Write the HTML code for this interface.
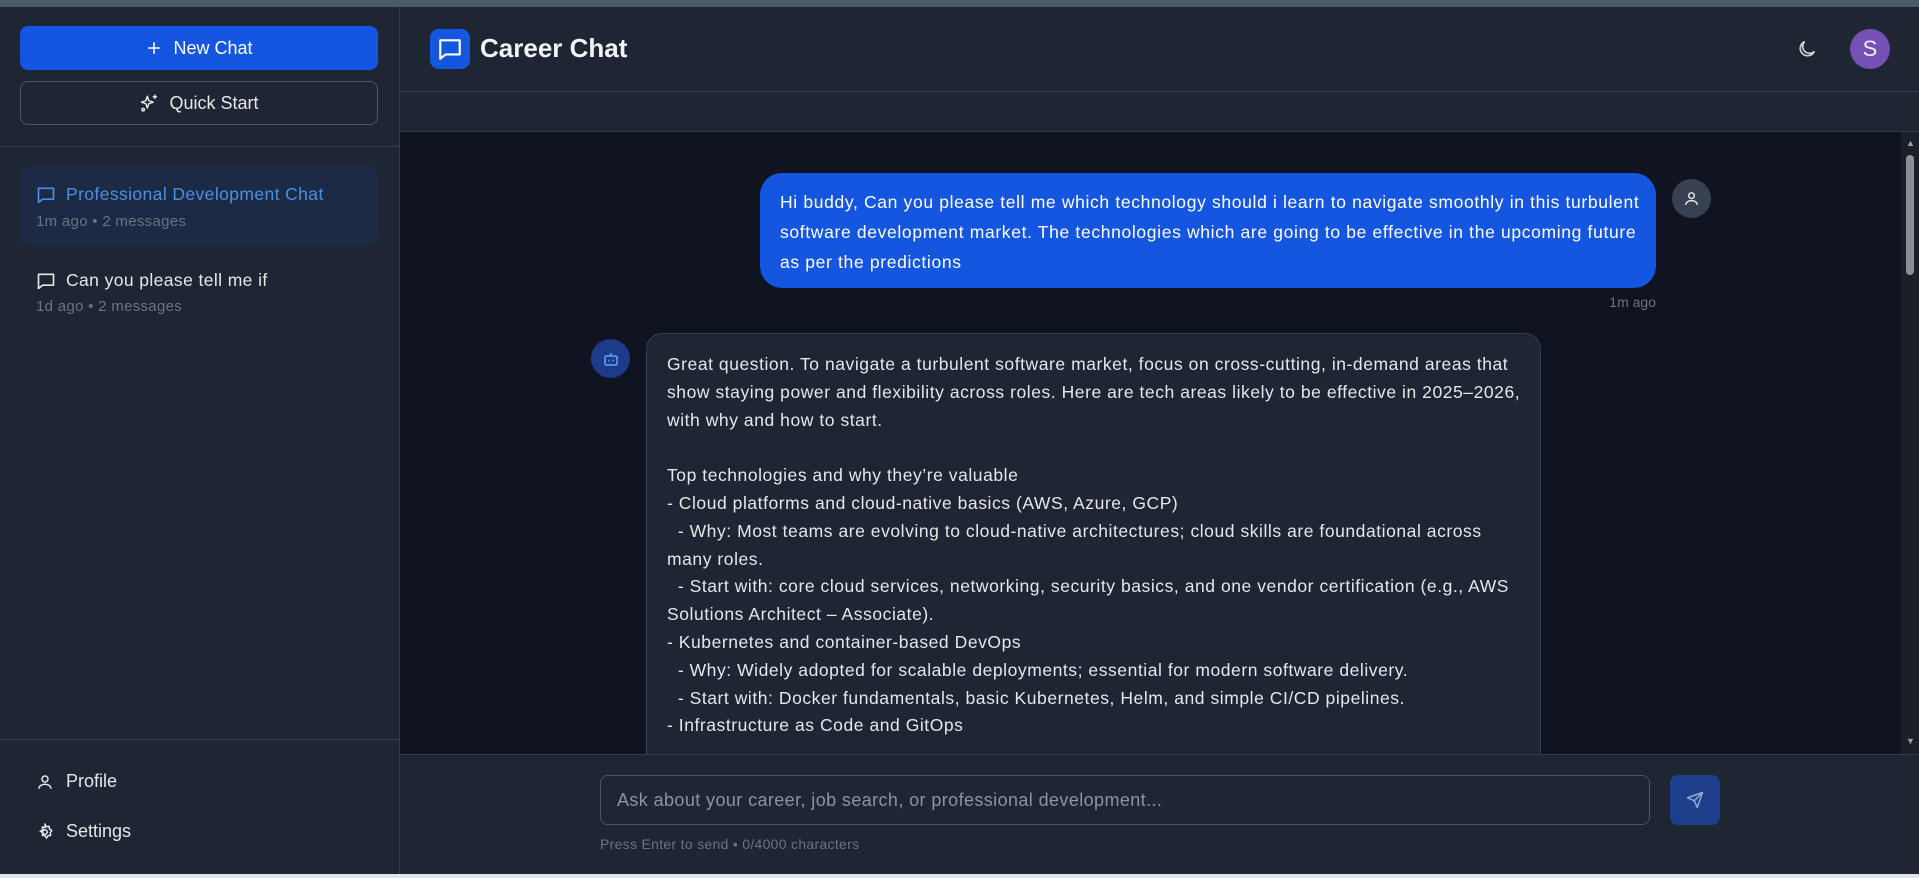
<!DOCTYPE html>
<html><head><meta charset="utf-8"><style>
*{box-sizing:border-box;margin:0;padding:0}
body{width:1919px;height:878px;overflow:hidden;background:#1e2533;font-family:"Liberation Sans",sans-serif;color:#e5e7eb;position:relative}
.abs{position:absolute}
.topstrip{left:0;top:0;width:1919px;height:7px;background:#4a5b6b}
.side{left:0;top:7px;width:400px;height:867px;background:#1e2533;border-right:1px solid #323c4c}
.btn{left:20px;width:358px;height:44px;border-radius:8px;display:flex;align-items:center;justify-content:center;font-size:18px;gap:10px}
.item{left:20px;width:358px;border-radius:10px}
.ttl{position:absolute;left:16px;font-size:17.5px;display:flex;align-items:center;gap:10px;font-weight:500;letter-spacing:0.4px}
.meta{position:absolute;left:16px;font-size:15px;color:#6b7280;letter-spacing:0.3px}
.main{left:400px;top:132px;width:1501px;height:622px;background:#0f1420}
.hdr{left:400px;top:7px;width:1519px;height:85px;background:#1e2533;border-bottom:1px solid #323c4c}
.sub{left:400px;top:92px;width:1519px;height:40px;background:#1e2533;border-bottom:1px solid #323c4c}
.scroll{left:1901px;top:132px;width:18px;height:622px;background:#1b1f27}
.ubub{left:760px;top:173px;width:896px;height:115px;background:#1456e0;border-radius:22px;padding:14px 20px 0 20px;font-size:17.5px;line-height:30px;color:#fff;letter-spacing:0.65px;white-space:nowrap}
.bbub{left:646px;top:333px;width:895px;height:440px;background:#1e2533;border:1px solid #334155;border-radius:16px;padding:17px 20px;font-size:17.5px;line-height:27.8px;color:#e5e7eb;white-space:pre;letter-spacing:0.55px}
.input{left:400px;top:754px;width:1519px;height:120px;background:#1e2533;border-top:1px solid #323c4c}
</style></head><body>
<div class="abs topstrip"></div>
<div class="abs side"></div>
<div class="abs btn" style="top:26px;background:#1456e0;color:#fff">
<svg width="18" height="18" viewBox="0 0 24 24" fill="none" stroke="#fff" stroke-width="2" stroke-linecap="round"><path d="M12 5v14M5 12h14"/></svg>New Chat</div>
<div class="abs btn" style="top:81px;border:1px solid #4b5563;color:#e5e7eb">
<svg width="20" height="20" viewBox="0 0 24 24" fill="none" stroke="#e5e7eb" stroke-width="1.8" stroke-linejoin="round"><path d="M10 4l1.8 5.2L17 11l-5.2 1.8L10 18l-1.8-5.2L3 11l5.2-1.8z"/><path d="M19 2v5M16.5 4.5h5"/><circle cx="5" cy="20" r="1.5"/></svg>Quick Start</div>
<div class="abs" style="left:0;top:146px;width:400px;height:1px;background:#323c4c"></div>
<div class="abs item" style="top:166px;height:80px;background:#1c2a45">
<div class="ttl" style="top:18px;color:#4b8fe3"><svg width="20" height="20" viewBox="0 0 24 24" fill="none" stroke="#4b8fe3" stroke-width="2" stroke-linejoin="round"><path d="M3 4h18v13H8l-5 4z"/></svg>Professional Development Chat</div>
<div class="meta" style="top:47px">1m ago • 2 messages</div></div>
<div class="abs item" style="top:252px;height:80px">
<div class="ttl" style="top:18px;color:#e5e7eb"><svg width="20" height="20" viewBox="0 0 24 24" fill="none" stroke="#e5e7eb" stroke-width="2" stroke-linejoin="round"><path d="M3 4h18v13H8l-5 4z"/></svg>Can you please tell me if</div>
<div class="meta" style="top:46px">1d ago • 2 messages</div></div>
<div class="abs" style="left:0;top:739px;width:400px;height:1px;background:#323c4c"></div>
<div class="abs" style="left:36px;top:771px;font-size:18px;display:flex;gap:12px;align-items:center"><svg width="18" height="18" viewBox="0 0 24 24" fill="none" stroke="#e5e7eb" stroke-width="2"><circle cx="12" cy="8" r="4"/><path d="M4 21c0-4 4-6 8-6s8 2 8 6"/></svg>Profile</div>
<div class="abs" style="left:36px;top:821px;font-size:18px;display:flex;gap:12px;align-items:center"><svg width="18" height="18" viewBox="0 0 24 24" fill="none" stroke="#e5e7eb" stroke-width="2"><circle cx="12" cy="12" r="3"/><path d="M12 2l2 3 3.5-.5.5 3.5 3 2-2 3 .5 3.5-3.5.5-2 3-2-3-3.5-.5.5-3.5-3-2 3-2-.5-3.5 3.5.5z"/></svg>Settings</div>

<div class="abs hdr"></div>
<div class="abs" style="left:430px;top:29px;width:40px;height:40px;border-radius:9px;background:#1456e0;display:flex;align-items:center;justify-content:center"><svg width="26" height="26" viewBox="0 0 24 24" fill="none" stroke="#fff" stroke-width="2" stroke-linejoin="round"><path d="M3 4h18v13H8l-5 4z"/></svg></div>
<div class="abs" style="left:480px;top:33px;font-size:26px;font-weight:600;color:#f3f4f6">Career Chat</div>
<svg class="abs" style="left:1796px;top:38px" width="22" height="22" viewBox="0 0 24 24" fill="none" stroke="#d1d5db" stroke-width="1.8"><path d="M20 14.5A8 8 0 1 1 9.5 4a6.5 6.5 0 0 0 10.5 10.5z"/></svg>
<div class="abs" style="left:1850px;top:29px;width:40px;height:40px;border-radius:50%;background:#7651b5;color:#eee;font-size:22px;display:flex;align-items:center;justify-content:center">S</div>
<div class="abs sub"></div>

<div class="abs main"></div>
<div class="abs scroll"><div style="position:absolute;left:5px;top:23px;width:8px;height:120px;border-radius:4px;background:#8a8f96"></div><div style="position:absolute;left:5px;top:6px;color:#9ca3af;font-size:9px">▲</div><div style="position:absolute;left:5px;top:604px;color:#9ca3af;font-size:9px">▼</div></div>
<div class="abs ubub">Hi buddy, Can you please tell me which technology should i learn to navigate smoothly in this turbulent<br>software development market. The technologies which are going to be effective in the upcoming future<br>as per the predictions</div>
<div class="abs" style="left:1672px;top:179px;width:39px;height:39px;border-radius:50%;background:#374151;display:flex;align-items:center;justify-content:center"><svg width="17" height="17" viewBox="0 0 24 24" fill="none" stroke="#e5e7eb" stroke-width="2"><circle cx="12" cy="8" r="4"/><path d="M4 21c0-4 4-6 8-6s8 2 8 6"/></svg></div>
<div class="abs" style="left:1560px;top:294px;width:96px;text-align:right;font-size:14px;color:#6b7280">1m ago</div>
<div class="abs" style="left:591px;top:339px;width:39px;height:39px;border-radius:50%;background:#1e3a8a;display:flex;align-items:center;justify-content:center"><svg width="18" height="18" viewBox="0 0 24 24" fill="none" stroke="#60a5fa" stroke-width="2"><rect x="4" y="8" width="16" height="12" rx="2"/><path d="M12 8V4M9 13v2M15 13v2"/></svg></div>
<div class="abs" style="left:646px;top:333px;width:895px;height:421px;overflow:hidden;border-radius:16px 16px 0 0">
<div class="bbub" style="position:absolute;left:0;top:0">Great question. To navigate a turbulent software market, focus on cross-cutting, in-demand areas that
show staying power and flexibility across roles. Here are tech areas likely to be effective in 2025–2026,
with why and how to start.

Top technologies and why they’re valuable
- Cloud platforms and cloud-native basics (AWS, Azure, GCP)
  - Why: Most teams are evolving to cloud-native architectures; cloud skills are foundational across
many roles.
  - Start with: core cloud services, networking, security basics, and one vendor certification (e.g., AWS
Solutions Architect – Associate).
- Kubernetes and container-based DevOps
  - Why: Widely adopted for scalable deployments; essential for modern software delivery.
  - Start with: Docker fundamentals, basic Kubernetes, Helm, and simple CI/CD pipelines.
- Infrastructure as Code and GitOps</div></div>

<div class="abs input"></div>
<div class="abs" style="left:600px;top:775px;width:1050px;height:50px;border:1px solid #4b5563;border-radius:8px;background:#1e2533;padding-left:16px;display:flex;align-items:center;font-size:18px;color:#8b94a3;letter-spacing:0.4px">Ask about your career, job search, or professional development...</div>
<div class="abs" style="left:1670px;top:775px;width:50px;height:50px;border-radius:8px;background:#1e3f8a;display:flex;align-items:center;justify-content:center"><svg width="18" height="18" viewBox="0 0 24 24" fill="none" stroke="#93a8d6" stroke-width="2" stroke-linejoin="round"><path d="M22 2L11 13M22 2l-7 20-4-9-9-4z"/></svg></div>
<div class="abs" style="left:600px;top:836px;font-size:14px;color:#6b7280;letter-spacing:0.3px">Press Enter to send • 0/4000 characters</div>
<div class="abs" style="left:0;top:874px;width:1919px;height:4px;background:#dfe3ea"></div>
</body></html>
